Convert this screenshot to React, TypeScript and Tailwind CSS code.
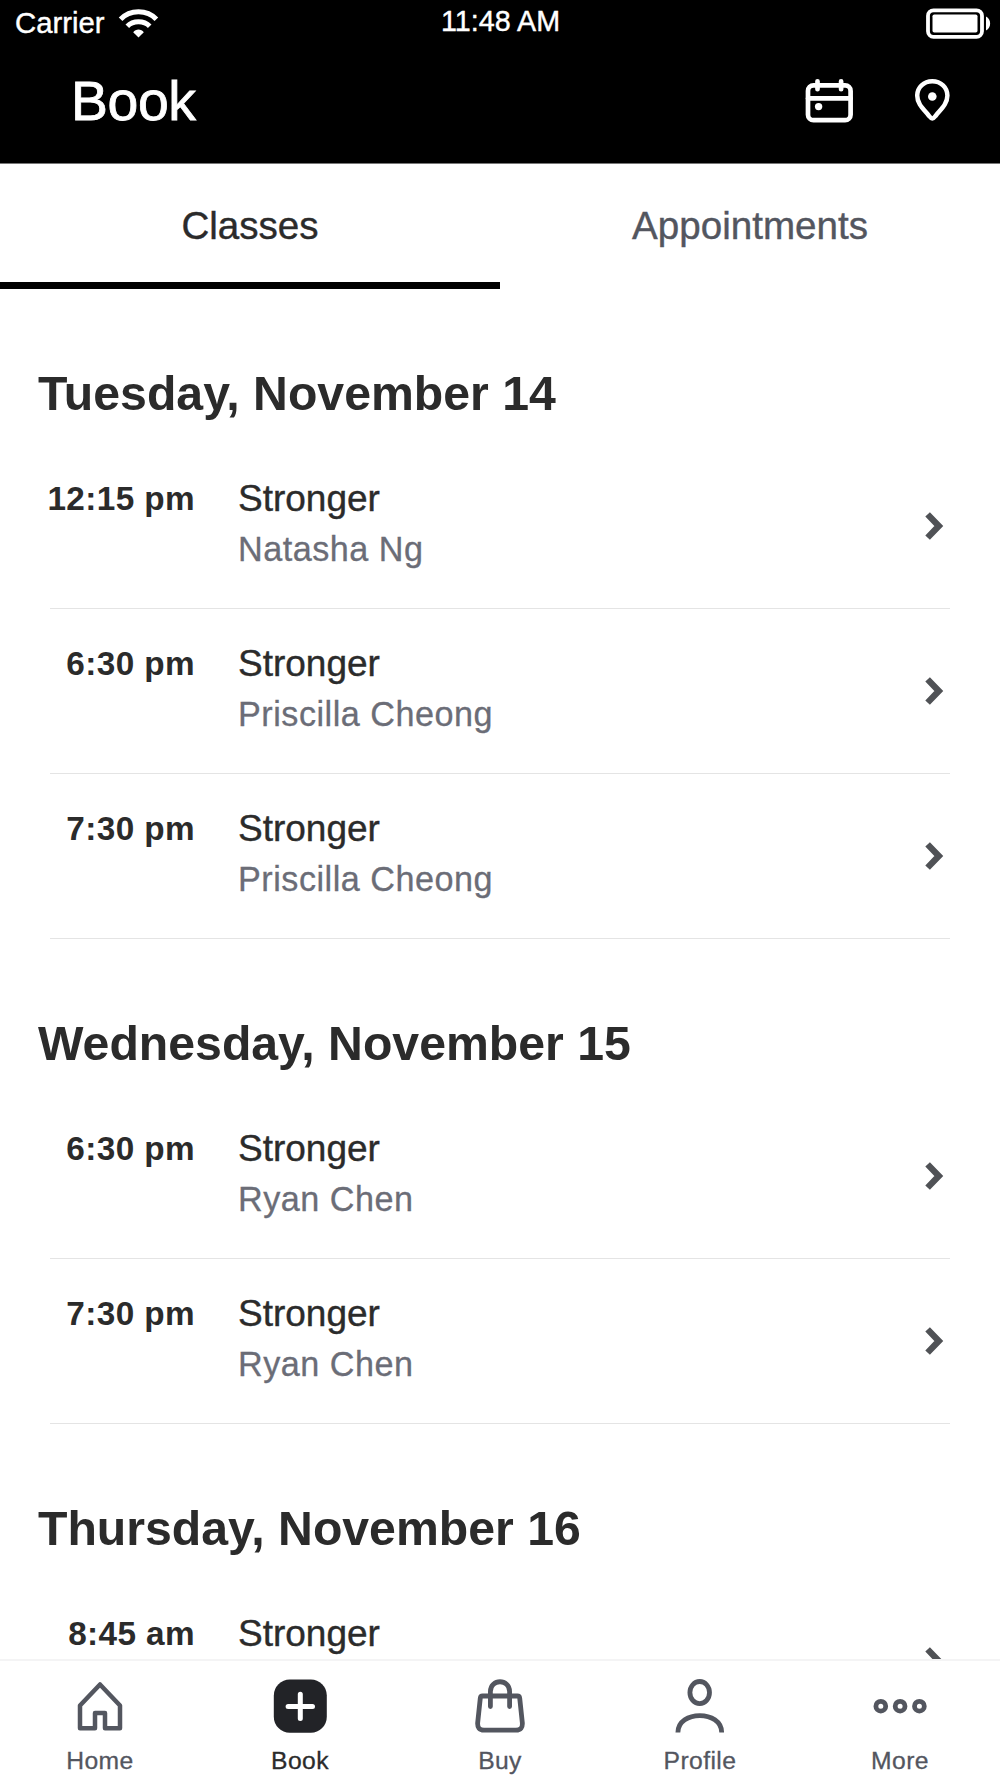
import { useState } from "react";
import type { ReactNode } from "react";

type ClassItem = { time: string; name: string; coach: string };
type Day = { title: string; classes: ClassItem[] };

const days: Day[] = [
    {
        title: "Tuesday, November 14",
        classes: [
            { time: "12:15 pm", name: "Stronger", coach: "Natasha Ng" },
            { time: "6:30 pm", name: "Stronger", coach: "Priscilla Cheong" },
            { time: "7:30 pm", name: "Stronger", coach: "Priscilla Cheong" },
        ],
    },
    {
        title: "Wednesday, November 15",
        classes: [
            { time: "6:30 pm", name: "Stronger", coach: "Ryan Chen" },
            { time: "7:30 pm", name: "Stronger", coach: "Ryan Chen" },
        ],
    },
    {
        title: "Thursday, November 16",
        classes: [{ time: "8:45 am", name: "Stronger", coach: "" }],
    },
];

function StatusBar() {
    return (
        <div className="grid h-[46px] grid-cols-3 items-start text-[28.7px] leading-[44px]">
            <div className="flex pl-[15px]">
                <span className="pt-px text-[29.3px] [-webkit-text-stroke:0.4px]">Carrier</span>
                <svg className="mt-[6px] ml-[11px]" width="44" height="34" viewBox="0 0 44 34" fill="none" stroke="white" strokeWidth="5">
                    <path d="M4.6 13.2C14 3.2 31 3.2 40.4 13.2" />
                    <path d="M11.3 20.2C17 14.3 28 14.3 33.7 20.2" />
                    <path d="M22.5 31.4L17.2 26.2C19.8 22.6 25.2 22.6 27.8 26.2Z" fill="white" stroke="none" />
                </svg>
            </div>
            <div className="pl-px text-center leading-[43px] [-webkit-text-stroke:0.4px]">11:48 AM</div>
            <div className="flex justify-end pt-[6px] pr-[7px]">
                <svg width="68" height="34" viewBox="0 0 68 34" fill="none">
                    <rect x="3" y="4.3" width="54" height="26.5" rx="5.5" stroke="white" strokeWidth="3.8" />
                    <rect x="7.5" y="8.5" width="45" height="18" rx="1.8" fill="white" />
                    <path d="M61 10.5C66.5 13 66.5 22 61 24.5Z" fill="white" />
                </svg>
            </div>
        </div>
    );
}

function Header() {
    return (
        <div className="flex h-[117px] items-start justify-between pr-[46px] pl-[71px]">
            <h1 className="pt-[23px] text-[55.4px] leading-[64px] tracking-[-0.4px] [-webkit-text-stroke:0.8px]">Book</h1>
            <div className="flex gap-[53px] pt-[29px]">
                <svg width="56" height="52" viewBox="0 0 56 52" fill="none" stroke="white" strokeWidth="4.7" strokeLinecap="round">
                    <rect x="7" y="10.4" width="42.6" height="34.8" rx="5.5" />
                    <path d="M7 23.4H49.6M16.5 6.3V14.2M40.1 6.3V14.2" />
                    <circle cx="17.6" cy="31.6" r="3.7" fill="white" stroke="none" />
                </svg>
                <svg width="44" height="52" viewBox="0 0 44 52" fill="none" stroke="white" strokeWidth="4.5" strokeLinejoin="round">
                    <path d="M22.3 43.6C21 43.6 20 42 18.5 40.2C13 33.6 7.2 28.5 7.2 20.6C7.2 12.3 13.8 6.2 22.3 6.2C30.8 6.2 37.4 12.3 37.4 20.6C37.4 28.5 31.6 33.6 26.1 40.2C24.6 42 23.6 43.6 22.3 43.6Z" />
                    <circle cx="22.3" cy="21.5" r="4.3" fill="white" stroke="none" />
                </svg>
            </div>
        </div>
    );
}

function Tabs() {
    const [tab, setTab] = useState("Classes");
    return (
        <div className="grid h-[125px] shrink-0 grid-cols-2 text-center text-[38.6px] leading-[44px] [-webkit-text-stroke:0.4px]">
            {["Classes", "Appointments"].map((t) => (
                <button
                    key={t}
                    onClick={() => setTab(t)}
                    className={
                        tab === t
                            ? "border-b-[7px] border-black pt-[5px] text-[#2b2b2b]"
                            : "border-b-[7px] border-transparent pt-[5px] text-[#53565f]"
                    }
                >
                    {t}
                </button>
            ))}
        </div>
    );
}

function ClassRow({ item }: { item: ClassItem }) {
    return (
        <div className="mx-[50px] flex h-[165px] border-b border-[#e4e4e4]">
            <div className="flex w-[145px] justify-end pt-[35px] text-[33.3px] leading-[40px] font-bold tracking-[0.4px] whitespace-nowrap">
                {item.time}
            </div>
            <div className="ml-[43px] grow pt-[33px]">
                <div className="text-[37px] leading-[44px] [-webkit-text-stroke:0.4px]">{item.name}</div>
                <div className="text-[34.2px] leading-[56px] tracking-[0.5px] text-[#6b6d77] [-webkit-text-stroke:0.3px]">{item.coach}</div>
            </div>
            <svg className="mr-[3px] self-center" width="24" height="32" viewBox="0 0 24 32" fill="none" stroke="#505256" strokeWidth="6.4">
                <path d="M4.6 4.4L15.8 16L4.6 27.6" />
            </svg>
        </div>
    );
}

function NavItem({ label, active, children }: { label: string; active?: boolean; children: ReactNode }) {
    return (
        <div className={active ? "flex flex-col items-center text-[#2b2b2b]" : "flex flex-col items-center text-[#53565f]"}>
            <svg className="mt-[15px]" width="60" height="60" viewBox="0 0 60 60" fill="none" stroke="#53565f" strokeWidth="4.8">
                {children}
            </svg>
            <span className="mt-[9px] text-[24.7px] leading-[32px] tracking-[0.4px] [-webkit-text-stroke:0.3px]">{label}</span>
        </div>
    );
}

function BottomNav() {
    return (
        <nav className="grid h-[119px] shrink-0 grid-cols-5 border-t-2 border-[#f4f4f5] bg-white">
            <NavItem label="Home">
                <path d="M30 8.5L50 29.5V52.3H35V37H25V52.3H10V29.5Z" strokeWidth="4.5" strokeLinejoin="round" />
            </NavItem>
            <NavItem label="Book" active>
                <rect x="3.8" y="3.5" width="53" height="53.2" rx="16" fill="#222327" stroke="none" />
                <path d="M30.3 18.2V42.6M18.1 30.4H42.5" stroke="white" strokeWidth="5" strokeLinecap="round" />
            </NavItem>
            <NavItem label="Buy">
                <path d="M12.5 20H47.5Q49.4 20 49.7 22L52.3 46.5Q53 54.2 46 54.2H14Q7 54.2 7.7 46.5L10.3 22Q10.6 20 12.5 20Z" />
                <path d="M20.4 30.5V15.5C20.4 2.5 39.6 2.5 39.6 15.5V30.5" strokeLinecap="round" />
            </NavItem>
            <NavItem label="Profile">
                <ellipse cx="29.7" cy="16.6" rx="9.8" ry="11.1" />
                <path d="M7.9 56.5C7.9 33.9 51.7 33.9 51.7 56.5" />
            </NavItem>
            <NavItem label="More">
                <circle cx="10.8" cy="30.2" r="4.9" />
                <circle cx="30.1" cy="30.2" r="4.9" />
                <circle cx="49.4" cy="30.2" r="4.9" />
            </NavItem>
        </nav>
    );
}

export default function App() {
    return (
        <div className="flex h-[1778px] w-[1000px] flex-col overflow-hidden bg-white font-['Liberation_Sans',Arial,sans-serif] text-[#2b2b2b]">
            <header className="shrink-0 border-b border-[#777777] bg-black text-white">
                <StatusBar />
                <Header />
            </header>
            <Tabs />
            <main className="min-h-0 flex-1 overflow-hidden">
                {days.map((day) => (
                    <section key={day.title}>
                        <h2 className="pt-[76px] pb-[23px] pl-[38px] text-[48.2px] leading-[56px] font-bold">{day.title}</h2>
                        {day.classes.map((item) => (
                            <ClassRow key={item.time} item={item} />
                        ))}
                    </section>
                ))}
            </main>
            <BottomNav />
        </div>
    );
}
